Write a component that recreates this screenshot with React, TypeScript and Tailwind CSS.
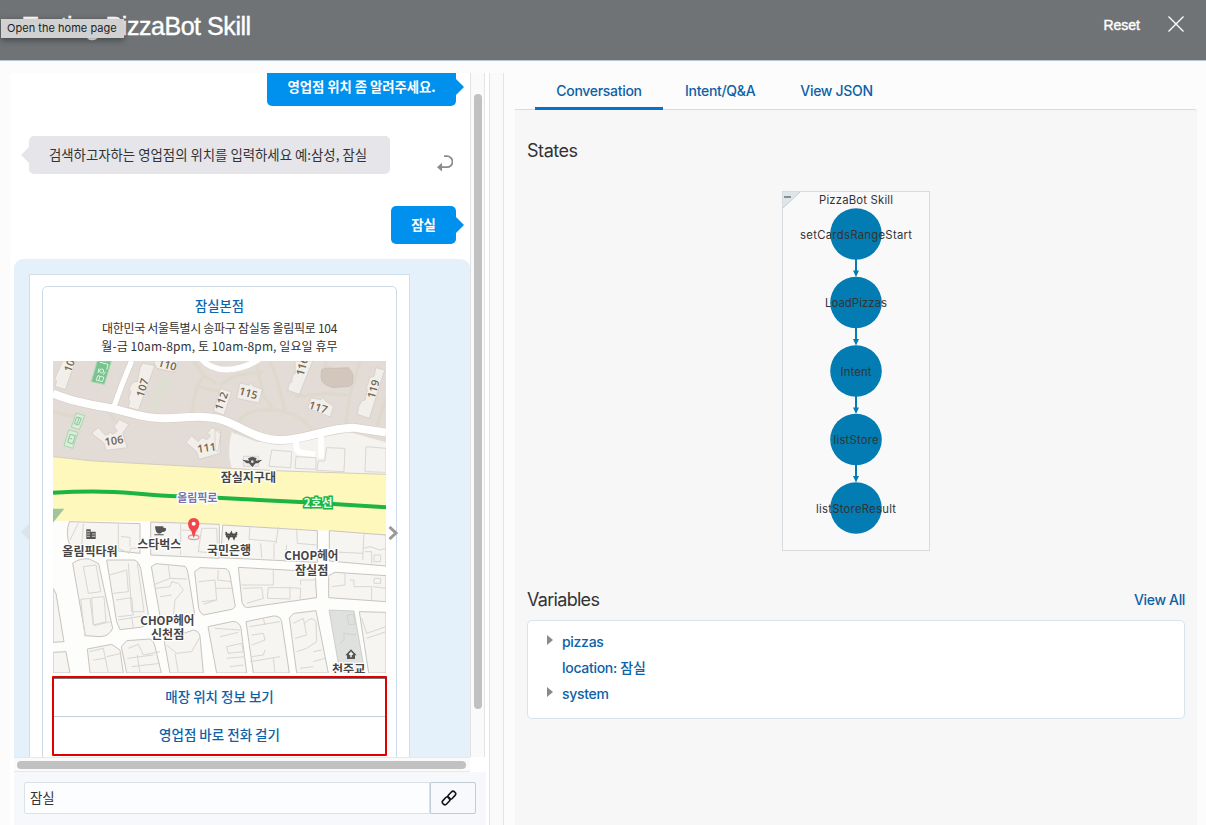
import React from "react";

const ui = "font-['Inter','Noto_Sans_CJK_KR',sans-serif]";
const kr = "font-['Noto_Sans_CJK_KR',sans-serif]";

const numbers = [
  { t: "10", x: 58, y: 32, r: -70 },
  { t: "107", x: 277, y: 98, r: -73 },
  { t: "110", x: 352, y: 29, r: 16 },
  { t: "106", x: 192, y: 257, r: -9 },
  { t: "111", x: 470, y: 278, r: -8 },
  { t: "112", x: 514, y: 138, r: -70 },
  { t: "115", x: 595, y: 114, r: 16 },
  { t: "116", x: 756, y: 34, r: -75 },
  { t: "117", x: 805, y: 157, r: 18 },
  { t: "119", x: 970, y: 102, r: -74 },
];

const places = [
  { t: "잠실지구대", x: 595, y: 381, w: 166 },
  { t: "올림픽타워", x: 120, y: 602, w: 166 },
  { t: "스타벅스", x: 328, y: 583, w: 132 },
  { t: "국민은행", x: 537, y: 600, w: 132 },
  { t: "CHOP헤어", x: 784, y: 616, w: 162 },
  { t: "잠실점", x: 785, y: 660, w: 100 },
  { t: "CHOP헤어", x: 352, y: 809, w: 162 },
  { t: "신천점", x: 353, y: 852, w: 100 },
  { t: "천주교", x: 896, y: 956, w: 100 },
];

const blocks = [
  "M58 500L270 506L270 595L60 572Q45 535 58 500Z",
  "M302 501L508 508L508 610L302 600Z",
  "M518 510L802 527L802 622L512 608Z",
  "M838 527L1008 540L1008 633L838 618Z",
  "M68 625Q90 608 118 612L146 626L188 820Q178 844 150 845L106 842Z",
  "M170 615L255 615Q268 622 272 640L298 795Q290 815 270 817L210 824L200 800Z",
  "M304 635L318 626L405 634Q412 640 414 655L434 778L412 800L334 805Z",
  "M434 650L450 638L528 641Q538 645 540 660L556 755Q550 765 535 765L460 780Q450 775 446 760Z",
  "M565 637L795 650L800 728L590 758Q580 755 576 742Z",
  "M836 662L855 652L1008 662L1008 740L836 728Z",
  "M9 700L18 715L42 860L9 862Z",
  "M9 892L48 890L60 954L9 954Z",
  "M112 882L185 868L210 885L220 954L120 954Z",
  "M214 875L230 857L300 852Q310 855 314 870L334 954L230 954Z",
  "M342 855L430 825Q448 828 450 845L460 954L360 954Z",
  "M474 815L550 799Q570 802 573 820L590 954L500 954Z",
  "M588 800L670 783Q692 782 695 800L718 954L610 954Z",
  "M718 788L732 775L798 767L835 954L740 954Z",
  "M928 770L1008 772L1008 954L956 954Z",
];

const lots = [
  "M205 506L205 580L238 595L242 580L268 580M213 545L240 547L240 575M60 555L85 505M100 506L95 575",
  "M392 506L392 600M395 525L445 528M455 520L500 520L503 595L445 590Z",
  "M600 512L597 555M598 553L680 560M685 515L678 565M740 520L742 565L800 570M632 565L635 608M672 565L672 612M710 570L705 618",
  "M942 533L938 615M835 590L940 595M940 580L960 575L990 585L1008 580M945 590L965 590L965 625M972 600L992 600L992 620L972 620Z",
  "M100 635L138 630L152 710L115 715Z M92 733L120 730L130 810M125 728L162 725L168 800L130 810ZM92 733L105 845M132 812L182 800",
  "M180 660L230 645L235 710L190 715M235 625L245 770L282 770L262 625M198 735L245 728L250 780L205 785M205 795L295 780M245 785L250 820",
  "M355 632L360 670L410 672M315 700L360 695L365 680L385 685L400 705L375 735L370 785M330 725L365 720M310 690L360 670",
  "M445 680L495 675L500 735L455 740M505 645L503 675L545 680M460 748L500 735M495 700L550 700",
  "M670 645L670 690L575 690M655 698L720 698L720 732L652 730ZM720 698L752 700L750 735M752 690L752 675L800 675M578 700L635 698L640 730L590 745",
  "M885 655L885 690L845 695M900 675L912 675L912 695L965 695L965 735M972 670L992 670L992 685L972 685ZM970 695L1008 700",
  "M118 890L160 880L175 954M170 905L215 895M130 915L165 910",
  "M235 880L265 868L280 900L330 890M232 910L310 900M245 935L330 925M262 900L270 954",
  "M350 870L380 895L425 890L450 845M375 895L385 954",
  "M495 820L570 825M510 845L565 832M530 875L575 865L580 890L535 895ZM530 910L585 905M540 935L580 930",
  "M598 815L690 800M640 790L645 810M605 840L640 835L645 855L605 870M605 905L640 900L645 885M600 920L690 905M670 910L675 954",
  "M730 805L760 790L770 840L735 850M765 805Q785 780 798 800L800 860L770 880L740 890M790 890L815 885M790 920L825 910M750 940L790 935",
  "M935 790L950 835L1008 815M950 850L1008 830",
  "M665 285L725 290L722 338L657 334ZM738 305L798 308L798 343L735 340ZM830 278L885 280L882 350L800 346L805 318L824 318ZM948 275L1008 280L1008 352L945 350Z",
];

function StoreMap() {
  return (
    <svg className="block h-[312px] w-[333px] shrink-0" viewBox="9 18 999 936" preserveAspectRatio="none">
      <rect x="9" y="18" width="999" height="936" fill="#fdfdfc" />
      <path d="M9 18H1008V358L700 348L495 338L130 318L9 305Z" fill="#e3dbd5" />
      <g fill="none" stroke="#dddacd" strokeWidth="10">
        <path d="M430 18L462 62L500 85M462 62L440 95L425 175M510 90L560 60M440 95L510 110" />
        <path d="M555 245Q560 160 650 165Q740 160 790 230M620 30L640 120L670 165M660 20L680 70L705 165M735 125L830 115L900 120L885 215M830 18L815 55M930 18L900 120M9 170L70 185M175 165L195 200" />
        <path d="M560 60L640 50M1008 130L980 215" />
      </g>
      <path d="M330 60L375 70L368 95L352 92L330 165L302 158Z" fill="#dedfd2" />
      <path d="M815 45Q828 36 850 40L895 38L908 55L908 85Q900 98 880 95L850 98L828 90Q812 80 813 65Z" fill="#d3c7bd" stroke="#c6b9ae" strokeWidth="2" />
      <path d="M545 232L620 260L735 262L900 232L1008 262V358L700 348L545 340Q530 290 545 232Z" fill="#f4f3f0" />
      <path d="M9 305L130 318L495 338L700 348L1008 358V540L835 527L495 508L300 499L9 497Z" fill="#fef8bd" />
      <path d="M9 305L130 318L495 338L700 348L1008 358" fill="none" stroke="#d4cdbb" strokeWidth="3" />
      <path d="M9 461H43L9 503Z" fill="#9fc69a" />
      <path d="M9 115C60 138 115 148 170 157S270 190 340 190S440 178 500 190S610 255 690 255S830 218 910 218L1008 233" fill="none" stroke="#d8d0ca" strokeWidth="28" />
      <path d="M245 18Q218 80 192 155" fill="none" stroke="#d4ccc6" strokeWidth="20" />
      <g fill="none" stroke="#fff">
        <path d="M9 115C60 138 115 148 170 157S270 190 340 190S440 178 500 190S610 255 690 255S830 218 910 218L1008 233" strokeWidth="24" />
        <path d="M245 18Q218 80 192 155" strokeWidth="16" />
        <path d="M455 12Q480 43 530 44Q590 41 632 8" strokeWidth="17" />
        <path d="M738 255Q735 290 755 293L796 298M813 240V310" strokeWidth="17" />
      </g>
      <g fill="#f2efeb" stroke="#d0c8c1" strokeWidth="2">
        <path d="M38 18L76 18L46 104L15 94L20 78L14 72Z" />
        <path d="M270 40L278 24L314 32L265 166L234 156L240 138L235 132L243 110L237 102L248 82L262 80Z" />
        <path d="M310 18H384L373 52L320 40Z" />
        <path d="M125 235L145 218L165 240L176 238L179 230L188 238L202 228L192 215L208 194L236 208L218 235L232 278L168 286L162 264Z" />
        <path d="M408 262L425 242L445 260L455 248L463 250L470 255L482 242L472 235L485 218L512 228L510 295L447 313L440 290Z" />
        <path d="M512 100L544 112L522 180L490 168Z" />
        <path d="M570 84L598 91L602 84L610 94L637 102L627 144L560 130Z" />
        <path d="M735 18H788L748 118L713 106L718 85L725 82L728 60L736 55Z" />
        <path d="M783 128L813 134L818 126L825 137L850 154L841 186L773 160Z" />
        <path d="M978 38L1004 45L958 190L922 178L926 155L935 138L945 135L952 105L950 98L960 66L972 64Z" />
        <path d="M495 225L512 235L504 290L495 285Z" />
        <path d="M580 304H626V334H580Z" fill="#eeeeed" />
      </g>
      <g fill="#78c38e" stroke="#a5d8af" strokeWidth="3">
        <path d="M142 18H184L163 88L124 80Z" />
        <path d="M78 174L104 182L88 224L64 216ZM56 225L84 232L68 280L42 272Z" fill="#dcecdb" />
      </g>
      <g fill="none" stroke="#e2f5e4" strokeWidth="3">
        <path d="M150 22L174 28L170 44M144 62L162 67L157 80L138 75ZM150 64L146 78M147 40L144 54M166 50L160 60" />
        <circle cx="155" cy="48" r="6" />
        <path d="M80 186L94 190L86 210L73 206ZM88 188L80 208M60 238L76 242L68 267L53 261ZM66 252L58 250" stroke="#8bc79b" />
      </g>
      <g fill="#f6f5f2" stroke="#c8c4be" strokeWidth="3">
        {blocks.map((d) => <path key={d} d={d} />)}
      </g>
      <path d="M837 765L912 768L945 954H870Z" fill="#dfe1de" stroke="#bfc0bd" strokeWidth="2" />
      <path d="M892 780L910 778L916 808L896 808ZM870 865L882 855L882 835L918 840" fill="none" stroke="#c7cac7" strokeWidth="2" />
      <g fill="none" stroke="#dad6d1" strokeWidth="3">
        {lots.map((d) => <path key={d} d={d} />)}
      </g>
      <path d="M9 413Q150 405 250 415T500 428L765 442L1008 457" fill="none" stroke="#1cb443" strokeWidth="12" />
      <g className="font-['Noto_Sans',sans-serif] font-semibold" fontSize="33" fill="#7a6a55" textAnchor="middle" stroke="#faf8f5" strokeWidth="3" paintOrder="stroke">
        {numbers.map((n) => (
          <text key={n.t} x={n.x} y={n.y} dy="12" transform={`rotate(${n.r} ${n.x} ${n.y})`}>{n.t}</text>
        ))}
      </g>
      <g className={`${kr} font-bold`} textAnchor="middle" paintOrder="stroke">
        <text x="442" y="440" fontSize="33" textLength="120" fill="#7774ad" stroke="#fff" strokeWidth="8">올림픽로</text>
        <text x="804" y="457" fontSize="34" textLength="86" fill="#e9ffec" stroke="#1cb443" strokeWidth="9">2호선</text>
        <g fill="#454545" stroke="#fff" strokeWidth="7" fontSize="36">
          {places.map((p) => (
            <text key={p.t + p.x} x={p.x} y={p.y} textLength={p.w} lengthAdjust="spacingAndGlyphs">{p.t}</text>
          ))}
        </g>
      </g>
      <g fill="#555">
        <path d="M577 314L597 317L594 310L607 305L620 310L617 317L637 314L624 325H617L607 336L597 325H590Z" />
        <circle cx="607" cy="320" r="4" fill="#ddd" />
        <path d="M109 523H122V530H137V552H109Z" />
        <path d="M111 530H120M111 537H120M111 544H120M126 537H135M126 544H135" stroke="#fff" strokeWidth="2" />
        <path d="M315 514H340V518Q350 517 348 525Q346 532 337 531Q333 536 327 536Q316 535 315 514ZM313 538H341V541H313Z" />
        <path d="M886 901L903 883L920 901H915V912H891V901Z" />
        <path d="M903 890V907M897 897H909" stroke="#fff" strokeWidth="4" />
      </g>
      <path d="M528 531L536 551L544 533L552 551L560 531M526 538H562M528 544H560" fill="none" stroke="#4c4c4c" strokeWidth="5" />
      <ellipse cx="431" cy="547" rx="16" ry="7" fill="none" stroke="#e89b9c" strokeWidth="4" />
      <path d="M431 489Q448 490 448 508Q448 518 438 528L431 550L424 528Q414 518 414 508Q414 490 431 489Z" fill="#f5444b" />
      <circle cx="431" cy="506" r="6" fill="#fff" />
    </svg>
  );
}

const states = [
  { name: "setCardsRangeStart", y: 43, w: 112 },
  { name: "LoadPizzas", y: 111.5, w: 62 },
  { name: "Intent", y: 180, w: 31 },
  { name: "listStore", y: 248.5, w: 45 },
  { name: "listStoreResult", y: 317, w: 80 },
];

function StateDiagram() {
  return (
    <svg className={`block h-[360px] w-[148px] ${ui}`} viewBox="0 0 148 360" fontSize="11.3" textAnchor="middle">
      <rect x="0.5" y="0.5" width="147" height="359" fill="#f9f9f9" stroke="#d6dcdf" />
      <path d="M1 1H18L1 17Z" fill="#dfe6ea" />
      <path d="M18 1L1 17" stroke="#c3cfd7" />
      <path d="M2 6H9" stroke="#88919a" strokeWidth="2" />
      <text x="74" y="13" fill="#333" textLength="74">PizzaBot Skill</text>
      {states.map((s, i) => (
        <g key={s.name}>
          <circle cx="74" cy={s.y} r="25.8" fill="#027cb2" />
          {i < 4 && (
            <>
              <path d={`M74 ${s.y + 25}V${s.y + 38}`} stroke="#027cb2" strokeWidth="2" />
              <path d={`M71 ${s.y + 36.5}H77L74 ${s.y + 43}Z`} fill="#027cb2" />
            </>
          )}
        </g>
      ))}
      {states.map((s) => (
        <text key={s.name} x="74" y={s.y + 4.6} fill="#333" textLength={s.w}>{s.name}</text>
      ))}
    </svg>
  );
}

function Header() {
  return (
    <header className="relative flex h-[61px] shrink-0 items-start border-b border-[#b9cad5] bg-[#6f7376] font-['Liberation_Sans',sans-serif] text-white">
      <h1 className="ml-[23px] mt-2 whitespace-nowrap text-[25px] leading-[36px] tracking-[-0.45px] [-webkit-text-stroke:0.4px_white]">Testing PizzaBot Skill</h1>
      <button className="ml-auto mt-[15px] text-[14px] leading-5 [-webkit-text-stroke:0.4px_white]">Reset</button>
      <svg className="ml-7 mr-[22px] mt-4 size-4" viewBox="0 0 16 16" fill="none" stroke="white" strokeWidth="1.4">
        <path d="M.5 .5L15.5 15.5M15.5 .5L.5 15.5" />
      </svg>
      <div className={`absolute left-px top-[19px] flex h-[19px] w-[123px] items-center whitespace-nowrap bg-[#d1d1d1] pl-[6px] text-[11px] tracking-[0.03px] text-[#222] shadow-[0_2px_6px_rgba(0,0,0,0.4)] ${ui}`}>Open the home page</div>
    </header>
  );
}

function StoreCard() {
  return (
    <div className="ml-[15px] mt-[15px] h-[500px] w-[381px] border border-[#d0dfe8] bg-white pl-3 pt-[11px]">
      <div className="flex h-[500px] w-[355px] flex-col items-center rounded-[5px] border border-[#ccdbe5]">
        <div className="mt-2 text-[13.3px] font-medium leading-[22px] text-[#0b66b0]">잠실본점</div>
        <div className="mt-[2px] text-[12px] leading-[18px] text-[#333]">
          <div className="whitespace-nowrap text-center tracking-[-0.3px]">대한민국 서울특별시 송파구 잠실동 올림픽로 104</div>
          <div className="whitespace-nowrap text-center tracking-[0.08px]">월-금 10am-8pm, 토 10am-8pm, 일요일 휴무</div>
        </div>
        <div className="mt-[6px]"><StoreMap /></div>
        <div className="mt-[3px] flex h-20 w-[335px] shrink-0 flex-col rounded-[1px] border-2 border-[#e00000] text-[13.5px] font-medium text-[#0b62a8]">
          <button className="h-[39px] border-b border-t border-b-[#c4ced5] border-t-[#777] pb-0.5">매장 위치 정보 보기</button>
          <button className="h-[37px] pb-0.5">영업점 바로 전화 걸기</button>
        </div>
      </div>
    </div>
  );
}

function Chat() {
  return (
    <section className="flex w-[480px] shrink-0 flex-col border-r border-[#e4e4e4] bg-white pl-1">
      <div className="flex h-[684px] shrink-0">
        <div className={`relative flex w-[457px] flex-col overflow-hidden border-r border-[#dfe3e6] text-[13.4px] text-[#333] ${kr}`}>
          <div className="relative mr-3.5 flex h-[33px] w-[189px] shrink-0 items-start justify-center self-end rounded-b-[5px] bg-[#0091ee] pt-[3px] font-bold leading-5 tracking-[-0.05px] text-white">
            영업점 위치 좀 알려주세요.
            <span className="absolute -right-2 top-1.5 border-y-8 border-l-8 border-y-transparent border-l-[#0091ee]" />
          </div>
          <div className="mt-[30px] flex h-[38px] shrink-0 items-center">
            <span className="ml-[7px] border-y-8 border-r-8 border-y-transparent border-r-[#e5e5e9]" />
            <div className="flex h-[38px] w-[361px] items-center justify-center whitespace-nowrap rounded-[5px] bg-[#e5e5ea] pb-px pr-[3px]">검색하고자하는 영업점의 위치를 입력하세요 예:삼성, 잠실</div>
            <svg className="ml-[47px] mt-[17px] h-[17px] w-4" viewBox="0 0 16 17" fill="none" stroke="#878c91" strokeWidth="1.8">
              <path d="M7 1.2H10A4.7 4.7 0 0 1 10 12.2H5" />
              <path d="M0 12.2L5 7.8V16.6Z" fill="#878c91" stroke="none" />
            </svg>
          </div>
          <div className="relative mr-3.5 mt-8 flex h-[38px] w-[65px] shrink-0 items-center justify-center self-end rounded-[5px] bg-[#0091ee] pb-px font-bold text-white">
            잠실
            <span className="absolute -right-2 top-[11px] border-y-8 border-l-8 border-y-transparent border-l-[#0091ee]" />
          </div>
          <div className="relative mt-[15px] h-[500px] shrink-0 overflow-hidden rounded-tl-[9px] rounded-tr-[9px] bg-[#e4f1fa]">
            <StoreCard />
            <span className="absolute left-[7px] top-[265px] border-y-8 border-r-8 border-y-transparent border-r-[#d9e4eb]" />
            <svg className="absolute left-[374px] top-[267px] h-[14px] w-[11px]" viewBox="0 0 11 14" fill="none" stroke="#999" strokeWidth="3">
              <path d="M1.5 1L8 7L1.5 13" />
            </svg>
          </div>
        </div>
        <div className="w-3.5 border-r border-[#e4e4e4] bg-[#fafafa] pl-[3px] pt-[21px]">
          <div className="h-[615px] w-2 rounded-full bg-[#c1c1c1]" />
        </div>
      </div>
      <div className="h-[15px] w-[456px] shrink-0 border-y border-[#e8e8e8] bg-[#fafafa] pl-[3px] pt-[3px]">
        <div className="h-2 w-[449px] rounded-full bg-[#c1c1c1]" />
      </div>
      <div className={`mr-[3px] flex grow items-start bg-[#f7f8fb] pl-2.5 pt-[10px] ${kr}`}>
        <div className="flex h-8 w-[406px] items-center rounded-l-[2px] border border-[#dce3e8] bg-[#fcfdfe] pb-0.5 pl-[5px] text-[13.4px] text-[#333]">잠실</div>
        <button className="flex h-8 w-[46px] items-center rounded-r-[2px] border border-[#c0ccd6] bg-[#f8f9fc] pl-[10px]">
          <svg className="size-4" viewBox="0 0 16 16" fill="none" stroke="#151515" strokeWidth="1.6">
            <rect x="-4.3" y="-2.5" width="8.6" height="5" rx="2.2" transform="translate(10.8 5.2) rotate(-47)" />
            <rect x="-4.3" y="-2.5" width="8.6" height="5" rx="2.2" transform="translate(5.2 10.8) rotate(-47)" />
          </svg>
        </button>
      </div>
    </section>
  );
}

const Caret = () => (
  <span className="-mt-[2px] border-y-[5.5px] border-l-[6px] border-y-transparent border-l-[#888b8e]" />
);

function Details() {
  return (
    <section className={`flex w-[682px] flex-col ${ui}`}>
      <nav className="flex h-9 shrink-0 pl-5 text-[14px] font-medium tracking-[-0.3px] text-[#0c61a7]">
        <a className="relative z-10 flex h-[37px] w-32 items-center justify-center border-b-[3px] border-[#0572ce]">Conversation</a>
        <a className="flex h-[34px] items-center pl-[22px]">Intent/Q&amp;A</a>
        <a className="flex h-[34px] items-center pl-[45px]">View JSON</a>
      </nav>
      <div className="flex grow flex-col rounded-tr-[3px] border-t border-[#d3dfe7] bg-[#f7f7f7] pl-3 pr-3">
        <h2 className="mt-7 text-[18px] leading-[26px] tracking-[-0.45px] text-[#333]">States</h2>
        <div className="mt-[27px] flex pl-[255px]"><StateDiagram /></div>
        <div className="mt-[35px] flex h-[26px] items-center justify-between">
          <h2 className="text-[18px] tracking-[-0.7px] text-[#333]">Variables</h2>
          <a className="text-[14px] font-medium tracking-[-0.35px] text-[#0c61a7]">View All</a>
        </div>
        <div className="mt-2 flex h-[99px] flex-col rounded-[5px] border border-[#d9e3e9] bg-white pl-[19px] pt-[7px] text-[14px] font-medium tracking-[-0.3px] text-[#0c61a7]">
          <div className="flex h-[26px] items-center gap-[9px]"><Caret />pizzas</div>
          <div className="flex h-[26px] items-center whitespace-pre pl-[15px]">location: 잠실</div>
          <div className="flex h-[26px] items-center gap-[9px]"><Caret />system</div>
        </div>
      </div>
    </section>
  );
}

export default function App() {
  return (
    <div className="flex h-[825px] w-[1206px] flex-col overflow-hidden bg-[#fcfcfc]">
      <Header />
      <main className="flex min-h-0 grow pl-2.5 pt-3">
        <Chat />
        <div className="mr-[11px] w-3.5 shrink-0 border-r border-[#e4e4e4] bg-[#fafafa]" />
        <Details />
      </main>
    </div>
  );
}
